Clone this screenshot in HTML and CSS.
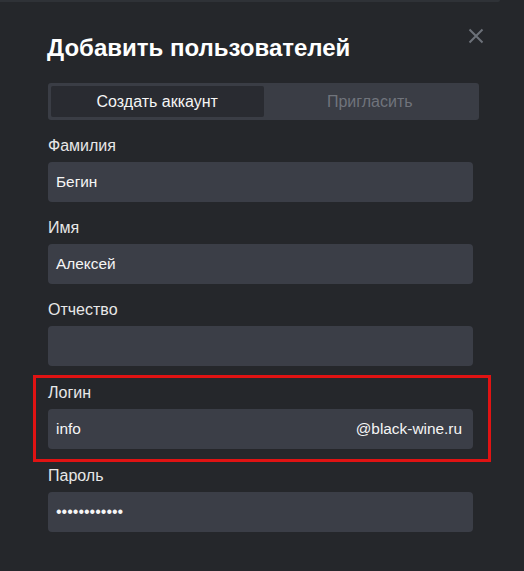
FILE: index.html
```html
<!DOCTYPE html>
<html lang="ru">
<head>
<meta charset="utf-8">
<link rel="stylesheet" href="styles.css">
</head>
<body>
<div class="topstrip"></div>
<div class="modal">
  <div class="header">
    <h1 class="title">Добавить пользователей</h1>
    <button class="close" aria-label="Закрыть">
      <svg width="16" height="16" viewBox="0 0 16 16"><path d="M1.5 1.5 L14.5 14.5 M14.5 1.5 L1.5 14.5" stroke="#6c7179" stroke-width="2" fill="none"/></svg>
    </button>
  </div>
  <div class="tabs">
    <div class="tab active">Создать аккаунт</div>
    <div class="tab">Пригласить</div>
  </div>
  <div class="field">
    <div class="label">Фамилия</div>
    <div class="input">Бегин</div>
  </div>
  <div class="field">
    <div class="label">Имя</div>
    <div class="input">Алексей</div>
  </div>
  <div class="field">
    <div class="label">Отчество</div>
    <div class="input"></div>
  </div>
  <div class="field highlighted">
    <div class="label">Логин</div>
    <div class="input split"><span>info</span><span>@black-wine.ru</span></div>
  </div>
  <div class="field">
    <div class="label">Пароль</div>
    <div class="input password">••••••••••••</div>
  </div>
</div>
</body>
</html>
```

FILE: styles.css
```css
* { box-sizing: border-box; }
html, body {
  margin: 0;
  padding: 0;
  background: #25272b;
  width: 524px;
  height: 571px;
  overflow: hidden;
  font-family: "Liberation Sans", Arial, sans-serif;
  color: #f2f2f2;
}
.topstrip {
  height: 2px;
  width: 500px;
  background: #2f3237;
  border-bottom-right-radius: 3px;
}
.modal {
  padding: 0 0 0 48px;
}
.header {
  display: flex;
  justify-content: space-between;
  align-items: flex-start;
  width: 436px;
  margin-top: 32px;
}
.title {
  margin: 0 0 0 -1px;
  font-size: 24px;
  font-weight: bold;
  line-height: 28px;
  color: #ffffff;
}
.close {
  background: none;
  border: none;
  padding: 0;
  margin-top: -6px;
  width: 16px;
  height: 16px;
  display: block;
}
.close svg { display: block; }
.tabs {
  display: flex;
  width: 431px;
  margin-top: 21px;
  padding: 3px;
  background: #3a3d45;
  border-radius: 3px;
}
.tab {
  flex: 1;
  height: 31px;
  display: flex;
  align-items: center;
  justify-content: center;
  font-size: 16px;
  color: #70747c;
  border-radius: 2px;
}
.tab.active {
  background: #292b31;
  color: #f5f5f5;
}
.field {
  width: 425px;
  margin-top: 17px;
}
.tabs + .field { margin-top: 17px; }
.label {
  font-size: 16px;
  line-height: 18px;
  color: #e8e8e8;
}
.input {
  margin-top: 7px;
  height: 40px;
  background: #3b3e47;
  border-radius: 4px;
  padding: 0 11px 0 8px;
  display: flex;
  align-items: center;
  font-size: 15.4px;
  color: #f5f5f5;
}
.input.split { justify-content: space-between; }
.input.password {
  font-size: 16px;
  padding-left: 8px;
}
.highlighted { position: relative; margin-top: 18px; }
.highlighted + .field { margin-top: 18px; }
.highlighted::after {
  content: "";
  position: absolute;
  left: -15px;
  right: -18px;
  top: -9px;
  bottom: -13px;
  border: 3px solid #e01313;
  pointer-events: none;
}
```
